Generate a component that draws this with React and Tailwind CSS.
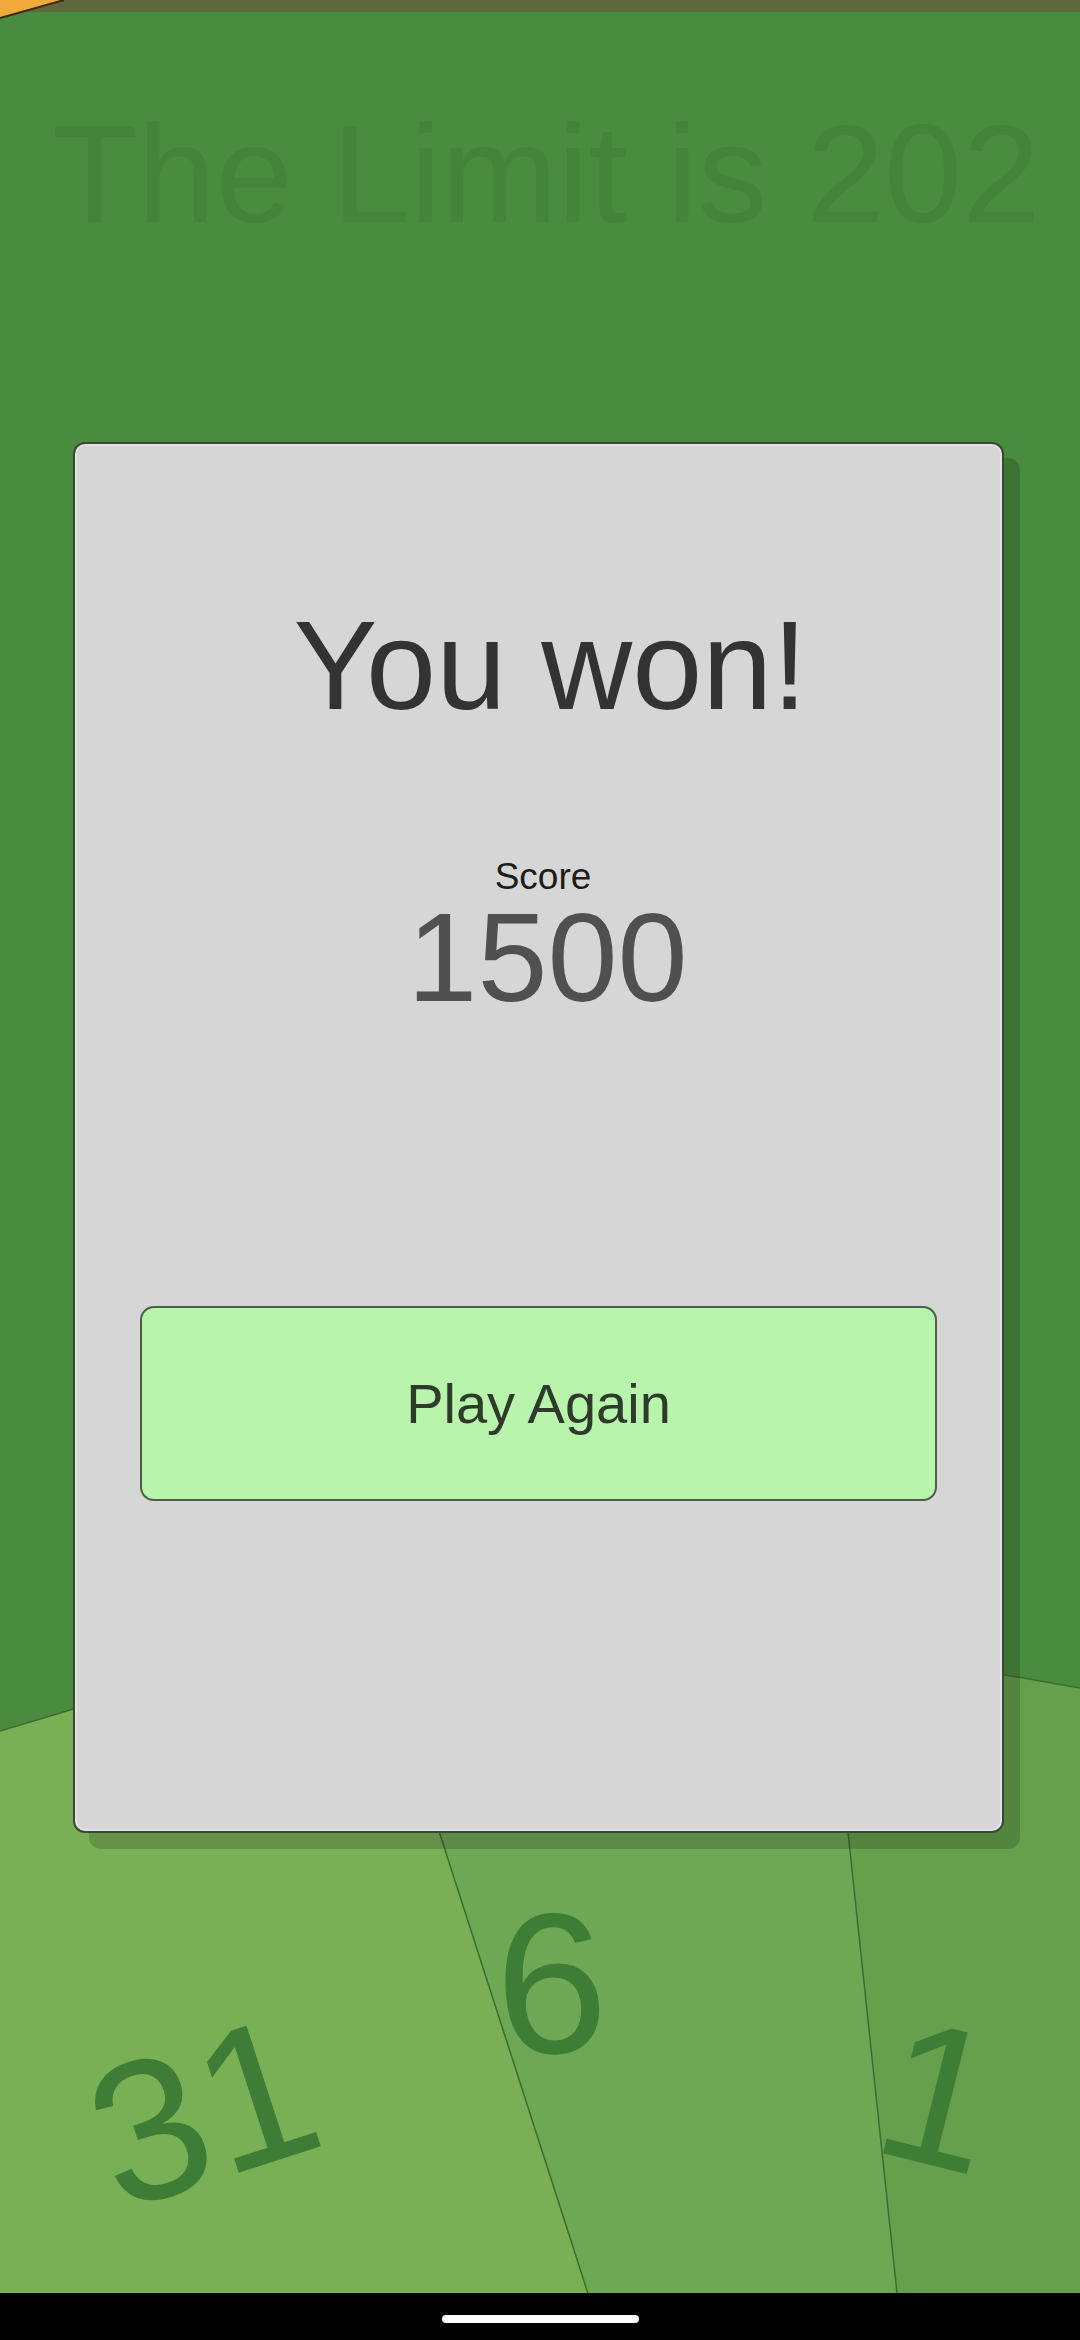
const font = { fontFamily: '"Liberation Sans", Arial, sans-serif' };

function GameTable() {
  return (
    <div className="absolute inset-0">
      <svg className="absolute inset-0" width="1080" height="2340" viewBox="0 0 1080 2340">
        <polygon points="0,1731 900,1461 900,2340 0,2340" fill="#79b056" />
        <line x1="0" y1="1731" x2="900" y2="1461" stroke="#3b6d30" strokeWidth="1.5" />
        <polygon points="300,1400 804,1400 902,2340 603,2340" fill="#6ea855" />
        <line x1="300" y1="1400" x2="603" y2="2340" stroke="#3b6d30" strokeWidth="1.5" />
        <polygon points="828,1644 1080,1688 1080,2340 902,2340" fill="#66a04c" />
        <polyline points="1080,1688 828,1644 902,2340" fill="none" stroke="#3b6d30" strokeWidth="1.5" />
      </svg>
      <div
        className="absolute left-[203px] top-[2112px] -translate-x-1/2 -translate-y-1/2 -rotate-[18deg] text-[200px] leading-none text-[#3d7d36]"
        style={font}
      >
        31
      </div>
      <div
        className="absolute left-[551px] top-[1984px] -translate-x-1/2 -translate-y-1/2 -rotate-[3deg] text-[200px] leading-none text-[#3d7d36]"
        style={font}
      >
        6
      </div>
      <div
        className="absolute left-[939px] top-[2096px] -translate-x-1/2 -translate-y-1/2 rotate-[14deg] text-[200px] leading-none text-[#3d7d36]"
        style={font}
      >
        1
      </div>
    </div>
  );
}

export default function App() {
  return (
    <div className="relative h-[2340px] w-[1080px] overflow-hidden bg-[#4a8c3f]" style={font}>
      <GameTable />

      <div className="relative flex h-full flex-col">
        <div className="h-[12px] bg-[#5e6a3c]" />

        <div className="mt-[92px] pl-[12px] text-center text-[140px] leading-none text-[#43833a]">
          The Limit is 202
        </div>

        <div className="mt-[198px] ml-[73px] flex h-[1391px] w-[931px] flex-col items-center rounded-[12px] border-2 border-[#3a4836] bg-[#d6d6d6] shadow-[16px_16px_0_rgba(0,0,0,0.17),inset_0_0_0_2px_rgba(235,235,235,0.6)]">
          <div className="mt-[159px] pl-[24px] text-[126px] leading-none text-[#333333]">You won!</div>
          <div className="mt-[129px] pl-[9px] text-[37px] leading-none text-[#1c1c1c]">Score</div>
          <div className="pl-[18px] text-[126px] leading-none text-[#505050]">1500</div>
          <button
            type="button"
            className="mt-[285px] flex h-[195px] w-[797px] items-center justify-center rounded-[14px] border-2 border-[#4d5e49] bg-[#b8f4ac] text-[56px] leading-none text-[#2e3b2b]"
            style={font}
          >
            Play Again
          </button>
        </div>

        <div className="mt-auto flex h-[47px] justify-center bg-black pt-[22px]">
          <div className="h-[8px] w-[197px] rounded-full bg-white" />
        </div>
      </div>

      <svg className="absolute left-0 top-0" width="80" height="24" viewBox="0 0 80 24">
        <polygon points="0,0 64,0 0,18" fill="#f2a93b" />
        <line x1="64" y1="0" x2="0" y2="18" stroke="#3a2a12" strokeWidth="2" />
      </svg>
    </div>
  );
}
